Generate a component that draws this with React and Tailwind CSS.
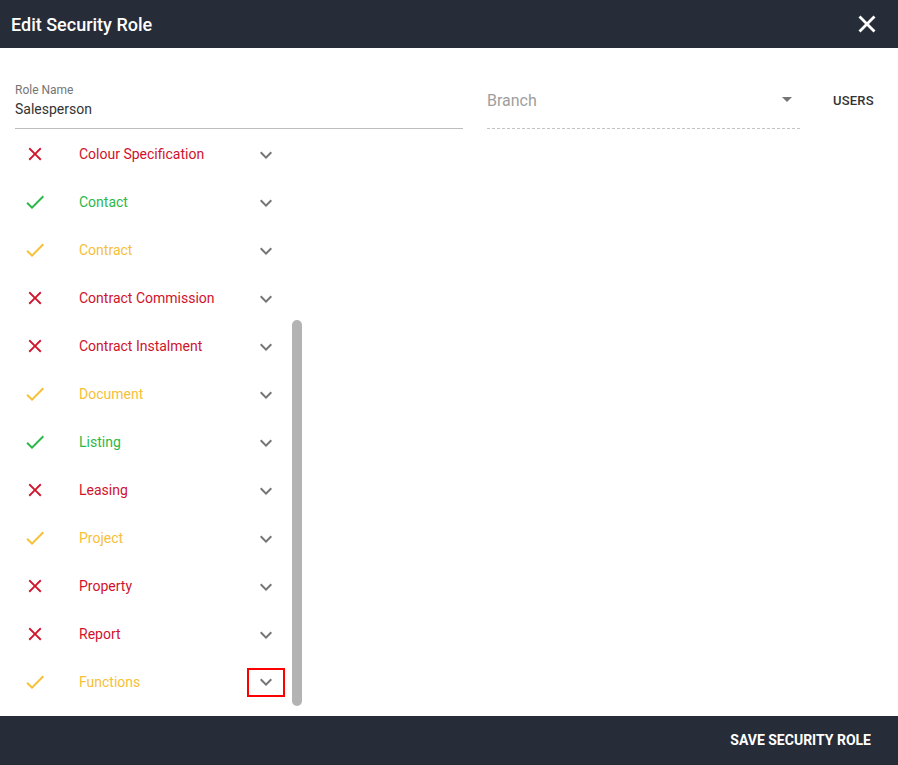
import React from "react";

const RED = "#d0122c";
const GREEN = "#2cb84b";
const AMBER = "#f6c038";

const rows = [
  ["Colour Specification", "x"],
  ["Contact", "g"],
  ["Contract", "a"],
  ["Contract Commission", "x"],
  ["Contract Instalment", "x"],
  ["Document", "a"],
  ["Listing", "g"],
  ["Leasing", "x"],
  ["Project", "a"],
  ["Property", "x"],
  ["Report", "x"],
  ["Functions", "a"],
];

function CloseIcon({ color, size = 24 }) {
  return (
    <svg width={size} height={size} viewBox="0 0 24 24" fill={color}>
      <path d="M19 6.41L17.59 5 12 10.59 6.41 5 5 6.41 10.59 12 5 17.59 6.41 19 12 13.41 17.59 19 19 17.59 13.41 12z" />
    </svg>
  );
}
function BoldClose() {
  return (
    <svg width="26" height="26" viewBox="0 0 24 24" stroke="#ffffff" strokeWidth="2.6" strokeLinecap="square" fill="none">
      <path d="M6 6L18 18M18 6L6 18" />
    </svg>
  );
}
function CheckIcon({ color }) {
  return (
    <svg width="24" height="24" viewBox="0 0 24 24" fill={color}>
      <path d="M9 16.17L4.83 12l-1.42 1.41L9 19 21 7l-1.41-1.41z" />
    </svg>
  );
}
function Chevron() {
  return (
    <svg width="24" height="24" viewBox="0 0 24 24" fill="#757575">
      <path d="M16.59 8.59L12 13.17 7.41 8.59 6 10l6 6 6-6z" />
    </svg>
  );
}

export default function App() {
  return (
    <div
      className="w-[898px] h-[765px] bg-white flex flex-col overflow-hidden"
      style={{ fontFamily: "Roboto, 'Liberation Sans', sans-serif" }}
    >
      <div className="h-[48px] bg-[#262c38] flex items-center justify-between pl-[11px] pr-[18px] shrink-0">
        <div className="text-white text-[18px] font-medium">Edit Security Role</div>
        <BoldClose />
      </div>

      <div className="flex-1 flex flex-col min-h-0">
        <div className="flex items-start pt-[34px] h-[82px] shrink-0">
          <div className="ml-[15px] w-[448px] h-[47px] border-b border-[#bdbdbd] flex flex-col">
            <div className="text-[12px] leading-[14px] text-[#757575] mt-[1px]">Role Name</div>
            <div className="text-[14px] leading-[18px] text-[#333] mt-[3px]">Salesperson</div>
          </div>
          <div className="ml-[24px] w-[313px] h-[47px] border-b border-dashed border-[#c4c4c4] flex items-start justify-between">
            <div className="text-[16px] text-[#9e9e9e] mt-[7px]">Branch</div>
            <div className="mt-[15px] mr-[8px] w-0 h-0 border-l-[5px] border-r-[5px] border-t-[5px] border-l-transparent border-r-transparent border-t-[#757575]" />
          </div>
          <div className="ml-[33px] mt-[9px] text-[13px] font-medium text-[#333] tracking-[0.2px]">USERS</div>
        </div>

        <div className="flex flex-1 min-h-0">
          <div className="w-[292px] flex flex-col">
            {rows.map(([label, t], i) => {
              const color = t === "x" ? RED : t === "g" ? GREEN : AMBER;
              const last = i === rows.length - 1;
              return (
                <div key={label} className="h-[48px] flex items-center shrink-0">
                  <div className="w-[24px] ml-[23px] flex justify-center">
                    {t === "x" ? <CloseIcon color={color} size={22} /> : <CheckIcon color={color} />}
                  </div>
                  <div className="ml-[32px] w-[151px] text-[14px]" style={{ color }}>
                    {label}
                  </div>
                  <div
                    className={
                      last
                        ? "ml-[17px] w-[38px] h-[29px] border-2 border-[#ff0000] flex items-center justify-center"
                        : "ml-[17px] w-[38px] h-[29px] flex items-center justify-center pt-[2px]"
                    }
                  >
                    <Chevron />
                  </div>
                </div>
              );
            })}
          </div>
          <div className="w-[10px] flex flex-col">
            <div className="mt-[190px] h-[386px] bg-[#b3b3b3] rounded-[5px]" />
          </div>
        </div>
      </div>

      <div className="h-[49px] bg-[#262c38] flex items-center justify-end pr-[27px] shrink-0">
        <div className="text-white text-[14px] font-bold">SAVE SECURITY ROLE</div>
      </div>
    </div>
  );
}
